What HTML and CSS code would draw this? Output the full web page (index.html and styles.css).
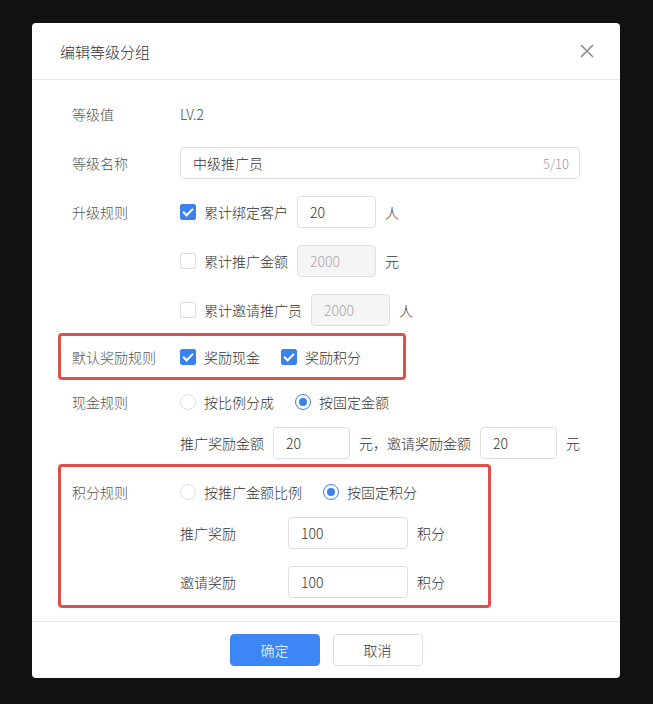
FILE: index.html
```html
<!DOCTYPE html>
<html lang="zh-CN">
<head>
    <meta charset="UTF-8">
    <meta name="viewport" content="width=device-width, initial-scale=1.0">
    <title>编辑等级分组</title>
    <link rel="stylesheet" href="styles.css">
</head>
<body>
    <div class="dialog">
        <!-- Header -->
        <div class="dialog-header">
            <span class="dialog-title">编辑等级分组</span>
            <svg class="close" width="14" height="14" viewBox="0 0 14 14">
                <path d="M1 1L13 13M13 1L1 13" stroke="#8c8c8c" stroke-width="1.6" fill="none"/>
            </svg>
        </div>

        <!-- Form -->
        <div class="dialog-body">
            <div class="row">
                <div class="label">等级值</div>
                <div class="value">LV.2</div>
            </div>

            <div class="row">
                <div class="label">等级名称</div>
                <div class="input input-long">
                    <span>中级推广员</span>
                    <span class="count">5/10</span>
                </div>
            </div>

            <div class="row">
                <div class="label">升级规则</div>
                <span class="check on"></span>
                <span class="text">累计绑定客户</span>
                <div class="input input-sm">20</div>
                <span class="unit">人</span>
            </div>
            <div class="row">
                <div class="label"></div>
                <span class="check"></span>
                <span class="text">累计推广金额</span>
                <div class="input input-sm disabled">2000</div>
                <span class="unit">元</span>
            </div>
            <div class="row row-before-reward">
                <div class="label"></div>
                <span class="check"></span>
                <span class="text">累计邀请推广员</span>
                <div class="input input-sm disabled">2000</div>
                <span class="unit">人</span>
            </div>

            <!-- highlighted: default reward -->
            <div class="mark mark-reward">
                <div class="row">
                    <div class="label">默认奖励规则</div>
                    <span class="check on"></span>
                    <span class="text gap-right">奖励现金</span>
                    <span class="check on"></span>
                    <span class="text">奖励积分</span>
                </div>
            </div>

            <div class="row row-tight">
                <div class="label">现金规则</div>
                <span class="radio"></span>
                <span class="text gap-right">按比例分成</span>
                <span class="radio on"></span>
                <span class="text">按固定金额</span>
            </div>
            <div class="row row-before-points">
                <div class="label"></div>
                <span class="plain">推广奖励金额</span>
                <div class="input input-sm">20</div>
                <span class="unit">元，邀请奖励金额</span>
                <div class="input input-sm">20</div>
                <span class="unit">元</span>
            </div>

            <!-- highlighted: points rule -->
            <div class="mark mark-points">
                <div class="row row-tight">
                    <div class="label">积分规则</div>
                    <span class="radio"></span>
                    <span class="text gap-right">按推广金额比例</span>
                    <span class="radio on"></span>
                    <span class="text">按固定积分</span>
                </div>
                <div class="row">
                    <div class="label"></div>
                    <span class="sub-label">推广奖励</span>
                    <div class="input input-md">100</div>
                    <span class="unit">积分</span>
                </div>
                <div class="row">
                    <div class="label"></div>
                    <span class="sub-label">邀请奖励</span>
                    <div class="input input-md">100</div>
                    <span class="unit">积分</span>
                </div>
            </div>
        </div>

        <!-- Footer -->
        <div class="dialog-footer">
            <button class="btn btn-primary">确定</button>
            <button class="btn">取消</button>
        </div>
    </div>
</body>
</html>
```

FILE: styles.css
```css
/* General styling */
body {
    margin: 0;
    background-color: #111111;
    font-family: "Noto Sans CJK SC", "Noto Sans", sans-serif;
    font-size: 14px;
    font-weight: 300;
    color: #333333;
    min-height: 704px;
}

.dialog {
    width: 588px;
    margin: 23px 0 0 32px;
    background-color: #ffffff;
    border-radius: 4px;
}

/* Header */
.dialog-header {
    height: 56px;
    padding: 0 26px 0 28px;
    border-bottom: 1px solid #e9e9e9;
    display: flex;
    align-items: center;
    justify-content: space-between;
}

.dialog-title {
    font-size: 15px;
    color: #333333;
}

/* Body */
.dialog-body {
    padding: 18px 40px 0 40px;
}

.row {
    display: flex;
    align-items: center;
    height: 32px;
    margin-bottom: 17px;
}

.row-tight {
    margin-bottom: 9px;
}

.row-before-reward {
    margin-bottom: 7px;
}

.row-before-points {
    margin-bottom: 5px;
}

.label {
    width: 108px;
    flex-shrink: 0;
    color: #555555;
}

.value {
    color: #444444;
}

.text {
    margin-left: 8px;
    white-space: nowrap;
}

.plain {
    white-space: nowrap;
}

.gap-right {
    margin-right: 21px;
}

.sub-label {
    width: 108px;
    flex-shrink: 0;
}

.unit {
    margin-left: 9px;
    white-space: nowrap;
}

/* Inputs */
.input {
    box-sizing: border-box;
    height: 32px;
    border: 1px solid #dcdfe6;
    border-radius: 4px;
    padding: 0 12px;
    display: flex;
    align-items: center;
    color: #333333;
}

.text + .input,
.plain + .input,
.unit + .input {
    margin-left: 9px;
}

.input-long {
    width: 400px;
    justify-content: space-between;
    padding-right: 10px;
}

.count {
    color: #999999;
    font-size: 13px;
}

.input-sm {
    width: 79px;
}

.input-md {
    width: 120px;
}

.disabled {
    background-color: #f5f5f5;
    color: #a8a8a8;
}

/* Checkbox and radio */
.check {
    box-sizing: border-box;
    width: 16px;
    height: 16px;
    border: 1px solid #dcdfe6;
    border-radius: 2px;
    flex-shrink: 0;
    position: relative;
}

.check.on {
    background-color: #3b82f0;
    border-color: #3b82f0;
}

.check.on::after {
    content: "";
    position: absolute;
    left: 4px;
    top: 1px;
    width: 4px;
    height: 8px;
    border: solid #ffffff;
    border-width: 0 2px 2px 0;
    transform: rotate(45deg);
}

.radio {
    box-sizing: border-box;
    width: 16px;
    height: 16px;
    border: 1px solid #dcdfe6;
    border-radius: 50%;
    flex-shrink: 0;
    display: flex;
    align-items: center;
    justify-content: center;
}

.radio.on {
    border-color: #3b82f0;
}

.radio.on::after {
    content: "";
    width: 8px;
    height: 8px;
    border-radius: 50%;
    background-color: #3b82f0;
}

/* Red annotation boxes */
.mark {
    box-sizing: border-box;
    border: 3px solid #e0504a;
    border-radius: 4px;
    margin-left: -14px;
    padding-left: 11px;
}

.mark-reward {
    width: 348px;
    padding-top: 5px;
    padding-bottom: 4px;
    margin-bottom: 6px;
}

.mark-reward .row {
    margin-bottom: 0;
}

.mark-points {
    width: 433px;
    padding-top: 9px;
    padding-bottom: 7px;
    margin-bottom: 13px;
}

.mark-points .row:last-child {
    margin-bottom: 0;
}

/* Footer */
.dialog-footer {
    border-top: 1px solid #e9e9e9;
    padding: 12px 0;
    display: flex;
    justify-content: center;
    gap: 13px;
}

.btn {
    width: 90px;
    height: 32px;
    border: 1px solid #dcdfe6;
    border-radius: 4px;
    background-color: #ffffff;
    color: #333333;
    font-family: inherit;
    font-size: 14px;
    font-weight: 300;
    cursor: pointer;
}

.btn-primary {
    background-color: #3d86f5;
    border-color: #3d86f5;
    color: #ffffff;
}
```
